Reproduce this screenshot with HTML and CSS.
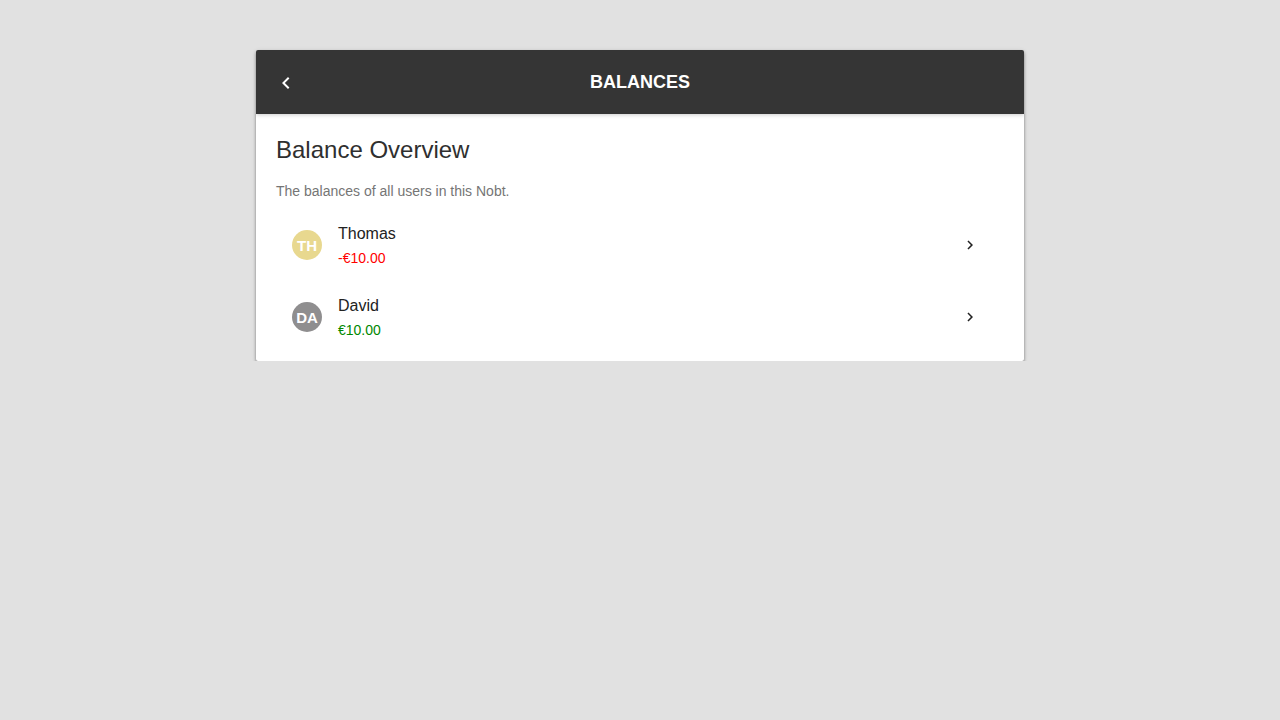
FILE: index.html
```html
<!DOCTYPE html>
<html>
<head>
<meta charset="utf-8">
<link rel="stylesheet" href="styles.css">
</head>
<body>
<div class="card">
  <header class="toolbar">
    <button class="back" aria-label="Back">
      <svg width="24" height="24" viewBox="0 0 24 24"><path fill="#fff" d="M15.41 7.41L14 6l-6 6 6 6 1.41-1.41L10.83 12z"/></svg>
    </button>
    <h1 class="title">BALANCES</h1>
    <span></span>
  </header>
  <main class="content">
    <h2 class="heading">Balance Overview</h2>
    <p class="desc">The balances of all users in this Nobt.</p>
    <ul class="list">
      <li class="item">
        <span class="avatar avatar-th">TH</span>
        <div class="text">
          <div class="name">Thomas</div>
          <div class="amount negative">-€10.00</div>
        </div>
        <svg class="chev" width="18" height="18" viewBox="0 0 24 24"><path fill="#222" d="M10 6L8.59 7.41 13.17 12l-4.58 4.59L10 18l6-6z"/></svg>
      </li>
      <li class="item">
        <span class="avatar avatar-da">DA</span>
        <div class="text">
          <div class="name">David</div>
          <div class="amount positive">€10.00</div>
        </div>
        <svg class="chev" width="18" height="18" viewBox="0 0 24 24"><path fill="#222" d="M10 6L8.59 7.41 13.17 12l-4.58 4.59L10 18l6-6z"/></svg>
      </li>
    </ul>
  </main>
</div>
</body>
</html>
```

FILE: styles.css
```css
* { box-sizing: border-box; }
body {
  margin: 0;
  background: #e1e1e1;
  font-family: "Liberation Sans", Arial, sans-serif;
}
.card {
  width: 768px;
  margin: 50px auto 0;
  background: #fff;
  border-radius: 2px;
  box-shadow: 0 2px 3px rgba(0,0,0,0.4), 0 1px 5px rgba(0,0,0,0.12);
  overflow: hidden;
}
.toolbar {
  position: relative;
  height: 64px;
  background: #353535;
  display: grid;
  grid-template-columns: 1fr auto 1fr;
  align-items: center;
  padding: 0 18px;
  box-shadow: 0 1px 4px rgba(0,0,0,0.2);
}
.back {
  background: none;
  border: 0;
  padding: 0;
  width: 24px;
  height: 24px;
  margin-top: 2px;
  display: flex;
  cursor: pointer;
}
.title {
  margin: 0;
  color: #fff;
  font-size: 18px;
  font-weight: bold;
}
.content {
  padding: 18px 20px 8px;
}
.heading {
  margin: 0;
  font-size: 24px;
  font-weight: normal;
  line-height: 36px;
  color: #2f2f2f;
}
.desc {
  margin: 13px 0 0;
  font-size: 14px;
  line-height: 20px;
  color: #757575;
}
.list {
  list-style: none;
  margin: 0;
  padding: 8px 0 0;
}
.item {
  height: 72px;
  display: flex;
  align-items: center;
  padding: 0 25px 0 16px;
}
.avatar {
  width: 30px;
  height: 30px;
  border-radius: 50%;
  color: #fff;
  font-weight: bold;
  font-size: 15px;
  display: flex;
  align-items: center;
  justify-content: center;
  flex: none;
}
.avatar-th { background: #e8d88f; }
.avatar-da { background: #8f8e8f; }
.text {
  flex: 1;
  margin-left: 16px;
  padding-top: 2px;
}
.name {
  font-size: 16px;
  line-height: 24px;
  color: #222;
}
.amount {
  font-size: 14px;
  line-height: 24px;
}
.negative { color: #ff0000; }
.positive { color: #008800; }
.chev { flex: none; }
```
